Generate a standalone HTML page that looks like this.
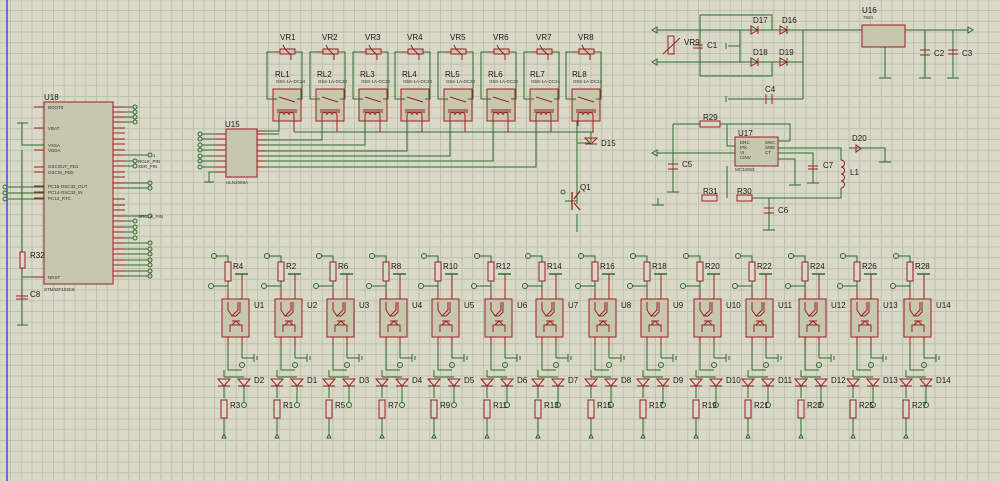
<!DOCTYPE html>
<html><head><meta charset="utf-8"><style>
html,body{margin:0;padding:0;}
body{width:999px;height:481px;overflow:hidden;background:#d9d9c7;
background-image:linear-gradient(to right,#c0c0ae 1px,transparent 1px),linear-gradient(to bottom,#c0c0ae 1px,transparent 1px);
background-size:10.75px 10.75px;background-position:10px 10px;}
svg{position:absolute;left:0;top:0;}
text{font-family:"Liberation Sans",sans-serif;fill:#1a1a1a;}
.l{font-size:8px;}.s{font-size:4.5px;fill:#333;}
</style></head><body>
<svg width="999" height="481" viewBox="0 0 999 481">
<defs>
<g id="opto" fill="none" stroke-width="1">
 <circle cx="-8" cy="6" r="2.5" stroke="#2e6b2e"/>
 <path d="M-5.5 6H6V12" stroke="#2e6b2e"/>
 <rect x="3" y="12" width="6" height="19" stroke="#9b2020" fill="#d9d9c7"/>
 <path d="M6 31V40M-9 36H6" stroke="#2e6b2e"/>
 <circle cx="-11" cy="36" r="2.5" stroke="#2e6b2e"/>
 <path d="M6 40V49M20 49V24" stroke="#9b2020"/>
 <path d="M13 24H26" stroke="#2e6b2e" stroke-width="1.5"/>
 <rect x="0" y="49" width="27" height="38" stroke="#9b2020" fill="#c7c7af"/>
 <path d="M6 52V60L10 66L16 60V52M10 66H14L18 62V52M8 82V75H20V82M10 75L14 71L18 75H10M10 71H18" stroke="#9b2020"/>
 <path d="M6 87V120H20M20 87V108" stroke="#2e6b2e"/>
 <path d="M6 87V96M20 87V96" stroke="#9b2020"/>
 <path d="M20 108H32M32 104V112M35 106V110" stroke="#2e6b2e"/>
 <circle cx="20" cy="115" r="2.5" stroke="#2e6b2e"/>
 <path d="M2 127H22M2 120V127" stroke="#2e6b2e"/>
 <path d="M-4 129H8L2 136Z M-4 136H8 M16 129H28L22 136Z M16 136H28" stroke="#9b2020"/>
 <path d="M2 136V148M22 136V152" stroke="#2e6b2e"/>
 <circle cx="22" cy="155" r="2.5" stroke="#2e6b2e"/>
 <rect x="-1" y="150" width="6" height="18" stroke="#9b2020" fill="#d9d9c7"/>
 <path d="M2 168V183" stroke="#2e6b2e"/>
 <path d="M0 188L2 184L4 188Z" stroke="#2e6b2e"/>
</g>
<g id="relay" fill="none">
 <path d="M0 60V32H35V60" stroke="#2e6b2e"/>
 <path d="M7 32H28" stroke="#9b2020"/>
 <rect x="13" y="29" width="15" height="5" stroke="#9b2020" fill="#c7c7af"/>
 <path d="M16 25L18 29L24 35V40" stroke="#9b2020"/>
 <rect x="6" y="69" width="28" height="32" stroke="#9b2020" fill="#c7c7af"/>
 <path d="M0 60V79H10M35 60V79H30" stroke="#2e6b2e"/>
 <path d="M12 77L28 82M10 90H30M10 92H30" stroke="#9b2020"/>
 <path d="M12 101V95a2 2 0 0 1 5 0a2 2 0 0 1 5 0a2 2 0 0 1 5 0V101" stroke="#9b2020"/>
 <path d="M12 101V106M27 101V112" stroke="#9b2020"/>
</g>
</defs>
<line x1="7" y1="0" x2="7" y2="481" stroke="#4a4ad8" stroke-width="1.5"/>
<!-- U18 -->
<rect x="44" y="102" width="69" height="182" fill="#c7c7af" stroke="#9b2020"/>
<g stroke="#9b2020"><path d="M34 107H44M34 128H44M34 145H44M34 150H44M34 167H44M34 172H44M34 186H44M34 192H44M34 198H44M34 277H44"/>
<path d="M113 107H125M113 112H125M113 117H125M113 122H125M113 128H125M113 133H125M113 139H125M113 144H125M113 150H125M113 155H125M113 161H125M113 166H125M113 172H125M113 177H125M113 183H125M113 188H125M113 199H125M113 205H125M113 210H125M113 216H125M113 221H125M113 227H125M113 232H125M113 238H125M113 243H125M113 249H125M113 254H125M113 260H125M113 265H125M113 271H125M113 276H125"/></g>
<g stroke="#2e6b2e" fill="none"><path d="M125 107H133M125 112H133M125 117H133M125 122H133M125 155H148M125 161H133M125 166H133M125 183H148M125 188H148M125 216H148M125 221H133M125 227H133M125 232H133M125 238H133M125 243H148M125 249H148M125 254H148M125 260H148M125 265H148M125 271H148M125 276H148"/>
<path d="M22 123V133M17 123H28M22 133V145H44M22 150V325M17 325H28M8 187H44M8 193H44M8 199H44M22 277H34"/></g>
<g fill="none" stroke="#2e6b2e"><circle cx="135" cy="107" r="2"/><circle cx="135" cy="112" r="2"/><circle cx="135" cy="117" r="2"/><circle cx="135" cy="122" r="2"/><circle cx="150" cy="155" r="2"/><circle cx="135" cy="161" r="2"/><circle cx="135" cy="166" r="2"/><circle cx="150" cy="183" r="2"/><circle cx="150" cy="188" r="2"/><circle cx="150" cy="216" r="2"/><circle cx="135" cy="221" r="2"/><circle cx="135" cy="227" r="2"/><circle cx="135" cy="232" r="2"/><circle cx="135" cy="238" r="2"/><circle cx="150" cy="243" r="2"/><circle cx="150" cy="249" r="2"/><circle cx="150" cy="254" r="2"/><circle cx="150" cy="260" r="2"/><circle cx="150" cy="265" r="2"/><circle cx="150" cy="271" r="2"/><circle cx="150" cy="276" r="2"/><circle cx="5" cy="187" r="2"/><circle cx="5" cy="193" r="2"/><circle cx="5" cy="199" r="2"/></g>
<rect x="20" y="252" width="5" height="16" fill="#d9d9c7" stroke="#9b2020"/>
<path d="M16 296H28M16 299H28" stroke="#9b2020"/>
<text x="44" y="100" class="l">U18</text><text x="30" y="258" class="l">R32</text><text x="30" y="297" class="l">C8</text>
<text x="48" y="109" class="s">BOOT0</text><text x="48" y="130" class="s">VBAT</text><text x="48" y="147" class="s">VSSA</text><text x="48" y="152" class="s">VDDA</text><text x="48" y="168" class="s">OSCOUT_PD1</text><text x="48" y="174" class="s">OSCIN_PD0</text><text x="48" y="188" class="s">PC15-OSC32_OUT</text><text x="48" y="194" class="s">PC14-OSC32_IN</text><text x="48" y="200" class="s">PC13_RTC</text><text x="48" y="279" class="s">NRST</text><text x="44" y="291" class="s">STM32F103C8</text>
<text x="153" y="157" class="s">1</text><text x="138" y="163" class="s">RCLK_PIN</text><text x="138" y="168" class="s">SER_PIN</text><text x="138" y="218" class="s">SRCLK_PIN</text>
<!-- U15 -->
<rect x="226" y="129" width="31" height="48" fill="#c7c7af" stroke="#9b2020"/>
<g stroke="#2e6b2e" fill="none"><path d="M202 134H216M202 139H216M202 145H216M202 150H216M202 156H216M202 161H216M202 167H216"/>
<circle cx="200" cy="134" r="2"/><circle cx="200" cy="139" r="2"/><circle cx="200" cy="145" r="2"/><circle cx="200" cy="150" r="2"/><circle cx="200" cy="156" r="2"/><circle cx="200" cy="161" r="2"/><circle cx="200" cy="167" r="2"/>
<path d="M216 172H209V182M204 182H214"/></g>
<path d="M216 134H226M216 139H226M216 145H226M216 150H226M216 156H226M216 161H226M216 167H226M216 172H226M257 131H265M257 134H265M257 140H265M257 145H265M257 151H265M257 156H265M257 161H265M257 167H265" stroke="#9b2020"/>
<text x="225" y="127" class="l">U15</text><text x="226" y="184" class="s">ULN2003A</text>
<!-- relays -->
<use href="#relay" x="267" y="20"/><use href="#relay" x="310" y="20"/><use href="#relay" x="353" y="20"/><use href="#relay" x="395" y="20"/><use href="#relay" x="438" y="20"/><use href="#relay" x="481" y="20"/><use href="#relay" x="524" y="20"/><use href="#relay" x="566" y="20"/>
<g stroke="#2e6b2e" fill="none"><path d="M265 131H279V121M294 132H594M265 134H279M265 140H322V121M265 145H365V121M265 151H407V121M265 156H450V121M265 161H493V121M265 167H536V121M577 121V132M577 132V190"/>
<path d="M591 132V142M577 143H591M577 190V204M565 201H577M577 214V232"/></g>
<path d="M585 138H597L591 144ZM585 144H597" fill="none" stroke="#9b2020"/>
<path d="M572 192V210M574 199L580 191M574 203L580 210" fill="none" stroke="#9b2020" stroke-width="1.3"/>
<circle cx="563" cy="192" r="2" fill="none" stroke="#2e6b2e"/>
<g class="l"><text x="280" y="40" class="l">VR1</text><text x="322" y="40" class="l">VR2</text><text x="365" y="40" class="l">VR3</text><text x="407" y="40" class="l">VR4</text><text x="450" y="40" class="l">VR5</text><text x="493" y="40" class="l">VR6</text><text x="536" y="40" class="l">VR7</text><text x="578" y="40" class="l">VR8</text>
<text x="275" y="77" class="l">RL1</text><text x="317" y="77" class="l">RL2</text><text x="360" y="77" class="l">RL3</text><text x="402" y="77" class="l">RL4</text><text x="445" y="77" class="l">RL5</text><text x="488" y="77" class="l">RL6</text><text x="530" y="77" class="l">RL7</text><text x="572" y="77" class="l">RL8</text>
<text x="601" y="146" class="l">D15</text><text x="580" y="190" class="l">Q1</text></g>
<g class="s"><text x="276" y="83" class="s">G5S-1A-DC24</text><text x="318" y="83" class="s">G5S-1A-DC24</text><text x="361" y="83" class="s">G5S-1A-DC24</text><text x="403" y="83" class="s">G5S-1A-DC24</text><text x="446" y="83" class="s">G5S-1A-DC24</text><text x="489" y="83" class="s">G5S-1A-DC24</text><text x="531" y="83" class="s">G5S-1A-DC24</text><text x="573" y="83" class="s">G5S-1A-DC24</text></g>
<!-- right top -->
<g stroke="#2e6b2e" fill="none">
<path d="M657 30H803V99M657 62H700M700 15V76H772V62M700 15H772V30M740 30V62M728 46H740M726 43V49M700 62H803M728 99H803M726 96V102M803 30H862M905 30H968M925 30V78M953 30V78M885 47V78M919 78H931M947 78H959M879 78H891"/>
<path d="M673 124H700M673 124V192M667 192H679M657 153H735M720 124H790V141M727 124V146H735M727 166V198M778 141H790M778 148H841V160M841 188V198H752M778 153H813V183M778 159H795V185M807 183H819M789 185H801M852 148H885V162M879 162H891M717 198H702M658 198V205M652 205H664M769 198V230M763 230H775"/>
</g>
<path d="M657 27L652 30L657 33ZM657 59L652 62L657 65ZM657 150L652 153L657 156ZM968 27L973 30L968 33Z" fill="none" stroke="#2e6b2e"/>
<g fill="none" stroke="#9b2020">
<rect x="668" y="36" width="6" height="18"/><path d="M663 54L680 38"/>
<path d="M693 45H703M693 48H703"/>
<path d="M751 26V34L758 30ZM758 26V34M780 26V34L787 30ZM787 26V34M751 58V66L758 62ZM758 58V66M780 58V66L787 62ZM787 58V66"/>
<rect x="862" y="25" width="43" height="22" fill="#c7c7af"/>
<path d="M920 50H930M920 55H930M948 50H958M948 54H958M766 94V104M772 94V104"/>
<rect x="700" y="121" width="20" height="6" fill="#d9d9c7"/><rect x="702" y="195" width="15" height="6" fill="#d9d9c7"/><rect x="737" y="195" width="15" height="6" fill="#d9d9c7"/>
<rect x="735" y="137" width="43" height="29" fill="#c7c7af"/>
<path d="M668 164H678M668 169H678M808 166H818M808 169H818M764 208H774M764 213H774M856 145V152L861 148.5ZM849 148H852"/>
<path d="M841 160a3 3 0 0 1 0 7a3 3 0 0 1 0 7a3 3 0 0 1 0 7a3 3 0 0 1 0 7"/>
</g>
<text x="862" y="13" class="l">U16</text><text x="863" y="19" class="s">7824</text>
<text x="684" y="45" class="l">VR9</text><text x="707" y="48" class="l">C1</text>
<text x="753" y="23" class="l">D17</text><text x="782" y="23" class="l">D16</text><text x="753" y="55" class="l">D18</text><text x="779" y="55" class="l">D19</text>
<text x="765" y="92" class="l">C4</text><text x="934" y="56" class="l">C2</text><text x="962" y="56" class="l">C3</text>
<text x="703" y="120" class="l">R29</text><text x="738" y="136" class="l">U17</text><text x="852" y="141" class="l">D20</text>
<text x="682" y="167" class="l">C5</text><text x="823" y="168" class="l">C7</text><text x="850" y="175" class="l">L1</text>
<text x="703" y="194" class="l">R31</text><text x="737" y="194" class="l">R30</text><text x="778" y="213" class="l">C6</text>
<text x="740" y="144" class="s">DRC</text><text x="740" y="149" class="s">IPK</text><text x="740" y="154" class="s">VI</text><text x="740" y="159" class="s">CINV</text><text x="765" y="144" class="s">SWC</text><text x="765" y="149" class="s">SWE</text><text x="765" y="154" class="s">CT</text>
<text x="735" y="171" class="s">MC34063</text>
<!-- bottom opto columns -->
<use href="#opto" x="222" y="250"/><use href="#opto" x="275" y="250"/><use href="#opto" x="327" y="250"/><use href="#opto" x="380" y="250"/><use href="#opto" x="432" y="250"/><use href="#opto" x="485" y="250"/><use href="#opto" x="536" y="250"/><use href="#opto" x="589" y="250"/><use href="#opto" x="641" y="250"/><use href="#opto" x="694" y="250"/><use href="#opto" x="746" y="250"/><use href="#opto" x="799" y="250"/><use href="#opto" x="851" y="250"/><use href="#opto" x="904" y="250"/>
<g class="l">
<text x="254" y="308">U1</text><text x="307" y="308">U2</text><text x="359" y="308">U3</text><text x="412" y="308">U4</text><text x="464" y="308">U5</text><text x="517" y="308">U6</text><text x="568" y="308">U7</text><text x="621" y="308">U8</text><text x="673" y="308">U9</text><text x="726" y="308">U10</text><text x="778" y="308">U11</text><text x="831" y="308">U12</text><text x="883" y="308">U13</text><text x="936" y="308">U14</text>
<text x="233" y="269">R4</text><text x="286" y="269">R2</text><text x="338" y="269">R6</text><text x="391" y="269">R8</text><text x="443" y="269">R10</text><text x="496" y="269">R12</text><text x="547" y="269">R14</text><text x="600" y="269">R16</text><text x="652" y="269">R18</text><text x="705" y="269">R20</text><text x="757" y="269">R22</text><text x="810" y="269">R24</text><text x="862" y="269">R26</text><text x="915" y="269">R28</text>
<text x="254" y="383">D2</text><text x="307" y="383">D1</text><text x="359" y="383">D3</text><text x="412" y="383">D4</text><text x="464" y="383">D5</text><text x="517" y="383">D6</text><text x="568" y="383">D7</text><text x="621" y="383">D8</text><text x="673" y="383">D9</text><text x="726" y="383">D10</text><text x="778" y="383">D11</text><text x="831" y="383">D12</text><text x="883" y="383">D13</text><text x="936" y="383">D14</text>
<text x="230" y="408">R3</text><text x="283" y="408">R1</text><text x="335" y="408">R5</text><text x="388" y="408">R7</text><text x="440" y="408">R9</text><text x="493" y="408">R11</text><text x="544" y="408">R13</text><text x="597" y="408">R15</text><text x="649" y="408">R17</text><text x="702" y="408">R19</text><text x="754" y="408">R21</text><text x="807" y="408">R23</text><text x="859" y="408">R25</text><text x="912" y="408">R27</text>
</g>
</svg>
</body></html>
